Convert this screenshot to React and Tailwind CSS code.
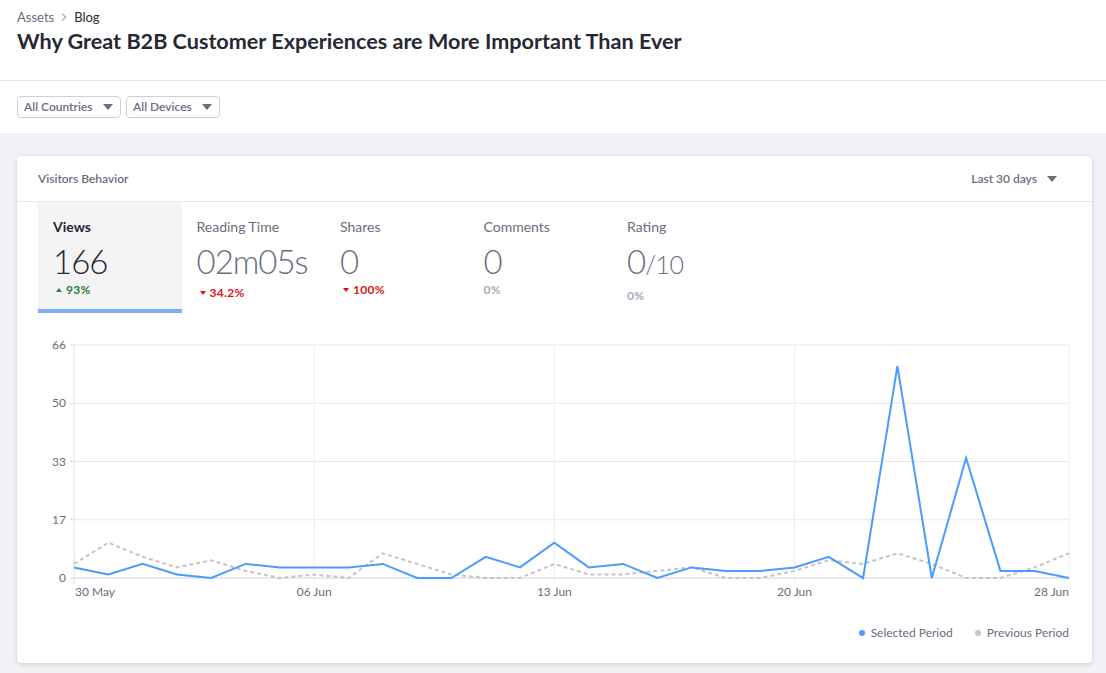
import React from "react";

const BLUE = [3,1,4,1,0,4,3,3,3,4,0,0,6,3,10,3,4,0,3,2,2,3,6,0,60,0,34,2,2,0];
const GRAY = [4,10,6,3,5,2,0,1,0,7,4,1,0,0,4,1,1,2,3,0,0,2,5,4,7,4,0,0,3,7];

const X0 = 57, X1 = 1052, YT = 10, YB = 243, MAX = 66;
const xs = (i) => X0 + (i * (X1 - X0)) / 29;
const ys = (v) => YB - (v / MAX) * (YB - YT);
const pts = (arr) => arr.map((v, i) => `${xs(i).toFixed(1)},${ys(v).toFixed(1)}`).join(" ");

function Caret({ className = "" }) {
  return (
    <svg width="10" height="6" viewBox="0 0 10 6" className={className}>
      <path d="M0 0h10L5 6z" fill="currentColor" />
    </svg>
  );
}

function Chart() {
  const yTicks = [
    { v: 0, l: "0" },
    { v: 16.5, l: "17" },
    { v: 33, l: "33" },
    { v: 49.5, l: "50" },
    { v: 66, l: "66" },
  ];
  const xTicks = [
    { i: 0, l: "30 May", a: "start" },
    { i: 7, l: "06 Jun", a: "middle" },
    { i: 14, l: "13 Jun", a: "middle" },
    { i: 21, l: "20 Jun", a: "middle" },
    { i: 29, l: "28 Jun", a: "end" },
  ];
  return (
    <svg width="1075" height="270" className="block" style={{ fontFamily: "Lato, sans-serif" }}>
      {yTicks.map((t) => (
        <g key={t.l}>
          <line x1={X0} x2={X1} y1={ys(t.v)} y2={ys(t.v)} stroke="#e7e7ed" strokeWidth={t.v === 0 ? 2 : 1} />
          <line x1={X0 - 4} x2={X0} y1={ys(t.v)} y2={ys(t.v)} stroke="#cdced9" strokeWidth="1" />
          <text x={X0 - 8} y={ys(t.v) + 4} textAnchor="end" fontSize="12" fill="#6b6c7e">{t.l}</text>
        </g>
      ))}
      {xTicks.map((t) => (
        <g key={t.l}>
          <line x1={xs(t.i)} x2={xs(t.i)} y1={YT} y2={YB + 6} stroke="#eeeef2" strokeWidth="1" />
          <text x={t.a === "start" ? xs(t.i) + 1 : xs(t.i)} y={YB + 18} textAnchor={t.a} fontSize="12" fill="#6b6c7e">{t.l}</text>
        </g>
      ))}
      <line x1={X0} x2={X0} y1={YT} y2={YB + 6} stroke="#e7e7ed" strokeWidth="1" />
      <polyline points={pts(GRAY)} fill="none" stroke="#c4c4c4" strokeWidth="2" strokeDasharray="4 3" />
      <polyline points={pts(BLUE)} fill="none" stroke="#4b9bff" strokeWidth="2" strokeLinejoin="miter" />
    </svg>
  );
}

function Metric({ label, value, sub, active, change, tone, low }) {
  return (
    <div className={`w-[143.5px] h-[111px] pl-[15px] pt-[16px] flex flex-col ${active ? "bg-[#f4f4f5] border-b-4 border-[#80acff]" : ""}`}>
      <div className={`text-[14px] leading-[18px] ${active ? "font-bold text-[#272833]" : "text-[#6b6c7e]"}`}>{label}</div>
      <div className={`mt-[6px] text-[33px] leading-[38px] font-light tracking-[-1px] ${active ? "text-[#272833]" : "text-[#6b6c7e]"}`}>
        {value}
        {sub && <span className="text-[25px] tracking-[-0.5px]">{sub}</span>}
      </div>
      <div className={`${low ? "mt-[5px]" : "mt-[2px]"} text-[12px] leading-[16px] font-bold tracking-[0.3px] flex items-center gap-[4px] ${tone === "up" ? "text-[#287d3c]" : tone === "down" ? "text-[#da1414]" : "text-[#a7a9bc] pl-0"}`}>
        {tone === "up" && (
          <svg width="6" height="4" viewBox="0 0 6 4" className="ml-[3px]"><path d="M0 4h6L3 0z" fill="currentColor" /></svg>
        )}
        {tone === "down" && (
          <svg width="6" height="4" viewBox="0 0 6 4" className="ml-[3px]"><path d="M0 0h6L3 4z" fill="currentColor" /></svg>
        )}
        <span>{change}</span>
      </div>
    </div>
  );
}

export default function App() {
  return (
    <div className="min-h-[673px] bg-[#f1f2f5] text-[#272833]" style={{ fontFamily: "Lato, 'Noto Sans', sans-serif" }}>
      <div className="bg-white border-b border-[#e7e7ed] h-[81px] px-[17px] pt-[9px]">
        <div className="flex items-center text-[13px] leading-[16px]">
          <span className="text-[#6b6c7e]">Assets</span>
          <svg width="12" height="12" viewBox="0 0 12 12" className="mx-[4px] text-[#6b6c7e]"><path d="M4 2.5l3.5 3.5L4 9.5" fill="none" stroke="currentColor" strokeWidth="1" /></svg>
          <span className="text-[#272833]">Blog</span>
        </div>
        <h1 className="mt-[2px] text-[21.6px] leading-[28px] font-bold text-[#272833]">
          Why Great B2B Customer Experiences are More Important Than Ever
        </h1>
      </div>
      <div className="bg-white h-[52px] px-[17px] flex items-center gap-[5px]">
        <button className="h-[22px] w-[104px] border border-[#cdced9] rounded-[4px] flex items-center justify-between pl-[6px] pr-[7px] text-[12px] font-semibold text-[#6b6c7e]">
          <span>All Countries</span>
          <Caret />
        </button>
        <button className="h-[22px] w-[94px] border border-[#cdced9] rounded-[4px] flex items-center justify-between pl-[6px] pr-[7px] text-[12px] font-semibold text-[#6b6c7e]">
          <span>All Devices</span>
          <Caret />
        </button>
      </div>
      <div className="pl-[17px] pr-[14px] pt-[23px] pb-[10px]">
        <div className="bg-white rounded-[4px] shadow-[0_1px_4px_rgba(0,0,0,0.16)]">
          <div className="h-[46px] border-b border-[#e7e7ed] px-[21px] flex items-center justify-between">
            <span className="text-[12px] font-semibold text-[#6b6c7e]">Visitors Behavior</span>
            <span className="flex items-center gap-[10px] text-[12px] font-semibold text-[#6b6c7e] pr-[14px]">
              Last 30 days
              <Caret />
            </span>
          </div>
          <div className="px-[21px] flex">
            <Metric label="Views" value="166" active change="93%" tone="up" />
            <Metric label="Reading Time" value="02m05s" change="34.2%" tone="down" low />
            <Metric label="Shares" value="0" change="100%" tone="down" />
            <Metric label="Comments" value="0" change="0%" tone="none" />
            <Metric label="Rating" value="0" sub="/10" change="0%" tone="none" low />
          </div>
          <div className="mt-[22px]">
            <Chart />
          </div>
          <div className="flex justify-end items-center gap-[22px] pr-[23px] pt-[20px] pb-[22px] text-[12px] leading-[16px] text-[#6b6c7e]">
            <div className="flex items-center gap-[6px]">
              <span className="w-[6px] h-[6px] rounded-full bg-[#4b9bff]" />
              <span>Selected Period</span>
            </div>
            <div className="flex items-center gap-[6px]">
              <span className="w-[6px] h-[6px] rounded-full bg-[#c4c4c4]" />
              <span>Previous Period</span>
            </div>
          </div>
        </div>
      </div>
    </div>
  );
}
